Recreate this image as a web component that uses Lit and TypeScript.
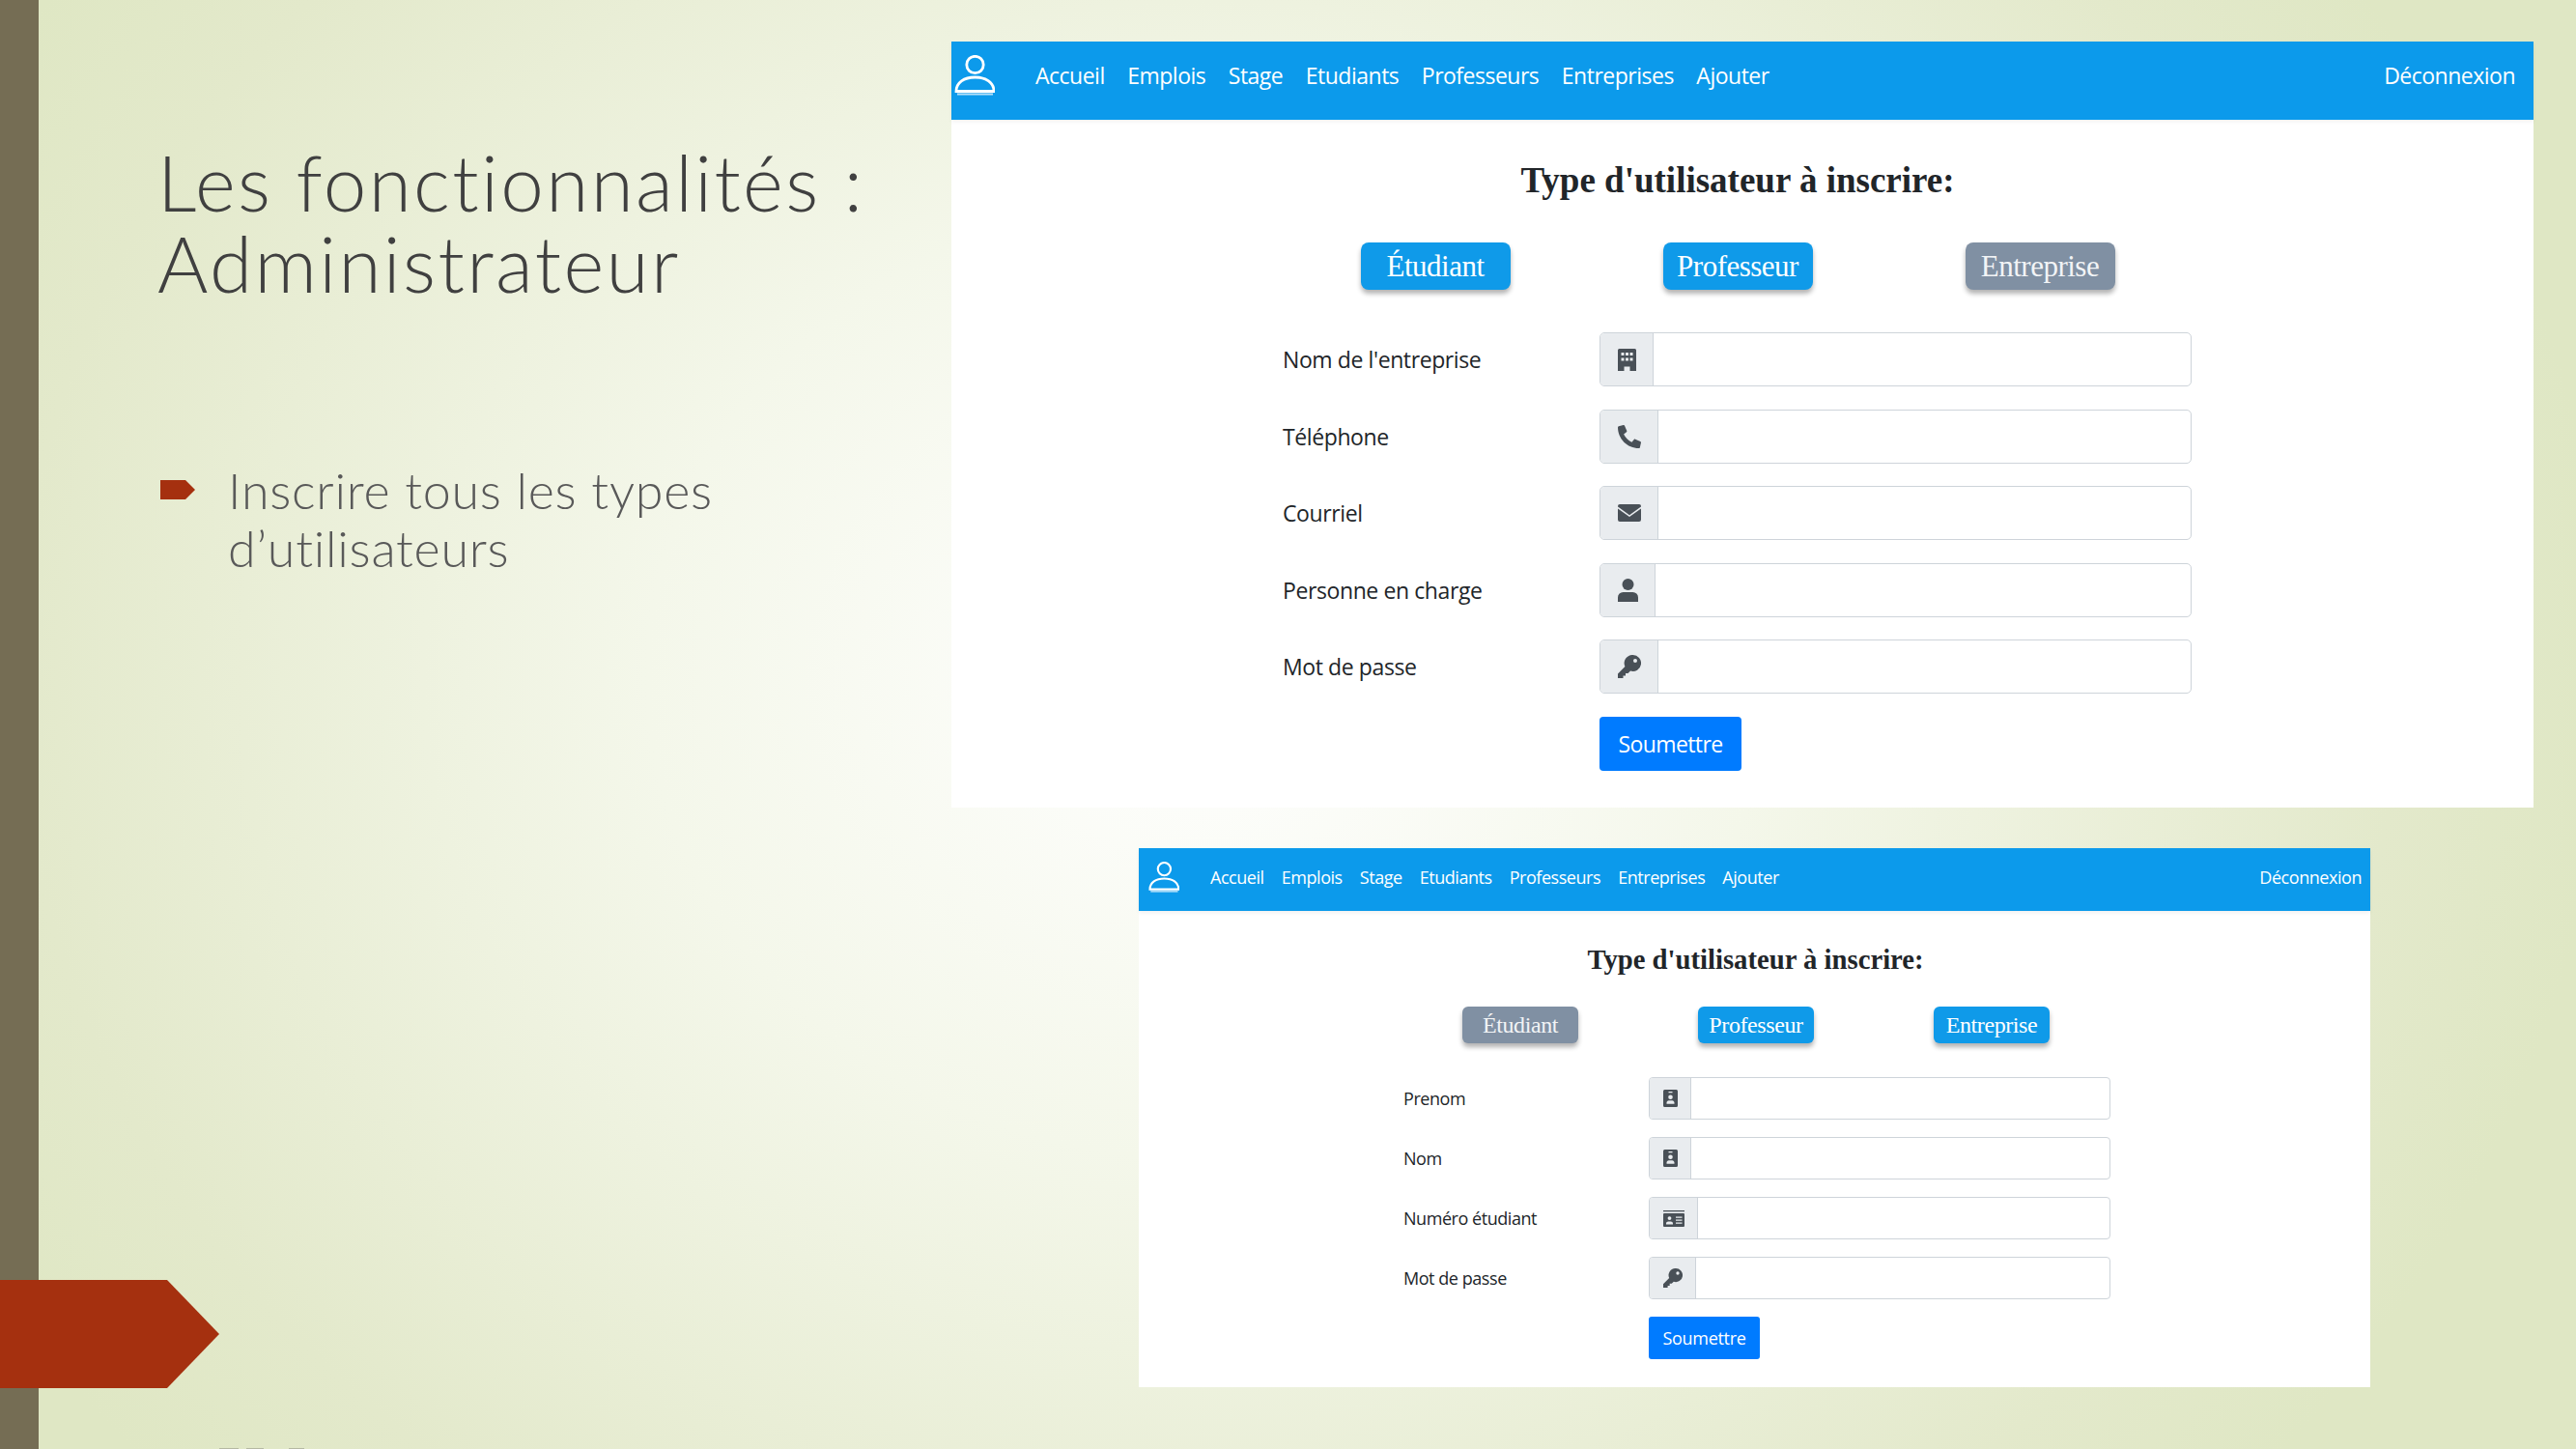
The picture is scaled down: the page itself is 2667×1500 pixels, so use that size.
import { LitElement, html, css, svg } from 'lit';
import { customElement, property } from 'lit/decorators.js';

const ICONS: Record<string, { box: string; body: unknown }> = {
  building: {
    box: '0 0 19 23',
    body: svg`<path fill-rule="evenodd" d="M1.5 0h16A1.5 1.5 0 0 1 19 1.5V23h-6.5v-4.5h-6V23H0V1.5A1.5 1.5 0 0 1 1.5 0zM3.5 4v3h3V4zm4.5 0v3h3V4zm4.5 0v3h3V4zM3.5 9.500v3h3v-3zm4.500 0v3h3v-3zm4.500 0v3h3v-3z"/>`,
  },
  phone: {
    box: '0 0 512 512',
    body: svg`<path transform="matrix(-1 0 0 1 512 0)" d="M493.400 24.600l-104-24c-11.300-2.600-22.900 3.300-27.500 13.900l-48 112c-4.200 9.800-1.400 21.300 6.900 28l60.600 49.600c-36 76.700-98.900 140.500-177.200 177.200l-49.600-60.600c-6.800-8.300-18.200-11.100-28-6.900l-112 48C3.900 366.500-2 378.100.6 389.400l24 104C27.100 504.200 36.700 512 48 512c256.100 0 464-207.500 464-464 0-11.200-7.700-20.900-18.600-23.400z"/>`,
  },
  envelope: {
    box: '0 0 24 18',
    body: svg`<path d="M2 0h20a2 2 0 0 1 2 2v.6l-12 8.600L0 2.600V2a2 2 0 0 1 2-2z"/><path d="M0 4.400l12 8.600 12-8.600V16a2 2 0 0 1-2 2H2a2 2 0 0 1-2-2z"/>`,
  },
  user: {
    box: '0 0 21 24',
    body: svg`<ellipse cx="10.500" cy="6" rx="6" ry="6"/><path d="M5.500 14h10a5.500 5.500 0 0 1 5.500 5.500V24H0v-4.500A5.500 5.500 0 0 1 5.500 14z"/>`,
  },
  key: {
    box: '0 0 24 24',
    body: svg`<path fill-rule="evenodd" d="M15.500 0A8.500 8.500 0 1 1 13 16.600L10.500 19H8v2.500H5.500V24H0v-4.500l7.400-7.400A8.500 8.500 0 0 1 15.500 0zm2.500 4a2 2 0 1 0 0 4 2 2 0 0 0 0-4z"/>`,
  },
  badge: {
    box: '0 0 15 18',
    body: svg`<path fill-rule="evenodd" d="M1.500 0h12A1.500 1.500 0 0 1 15 1.500v15a1.500 1.500 0 0 1-1.500 1.500h-12A1.500 1.500 0 0 1 0 16.500v-15A1.500 1.500 0 0 1 1.500 0zM5.500 2v1.200h4V2zM7.500 5.500a2.300 2.300 0 1 0 0 4.600 2.300 2.300 0 0 0 0-4.600zM3.500 14.800h8v-1.300c0-1.300-1-2.300-2.300-2.300H5.800c-1.300 0-2.300 1-2.300 2.300z"/>`,
  },
  card: {
    box: '0 0 22 17',
    body: svg`<path d="M0 0h22v1.300H0z"/><path fill-rule="evenodd" d="M1 3h20a1 1 0 0 1 1 1v12a1 1 0 0 1-1 1H1a1 1 0 0 1-1-1V4a1 1 0 0 1 1-1zM6.500 6.200a1.900 1.900 0 1 0 0 3.800 1.900 1.900 0 0 0 0-3.800zM3 14.500h7v-1c0-1.200-1-2-2.200-2H5.200c-1.200 0-2.200.8-2.200 2zM13 6.500v1.300h6.500V6.500zm0 3v1.300h6.500V9.500zm0 3v1.300h6.500v-1.300z"/>`,
  },
};

interface Field {
  label: string;
  icon: string;
}

@customElement('form-window')
class FormWindow extends LitElement {
  static styles = css`
    :host {
      display: block;
      position: absolute;
      background: #fff;
      color: #212529;
      font-family: 'Open Sans', 'Noto Sans', sans-serif;
    }

    nav {
      display: flex;
      align-items: center;
      box-sizing: border-box;
      background: #0c9aeb;
      color: #fff;
      box-shadow: 0 2px 4px rgba(0, 0, 0, 0.06);
    }

    .avatar {
      flex-shrink: 0;
      fill: none;
      stroke: #fff;
    }

    .links {
      display: flex;
      flex: 1;
    }

    .logout {
      white-space: nowrap;
    }

    h3 {
      margin: 0;
      text-align: center;
      font-family: 'Liberation Serif', serif;
      font-weight: 700;
      color: #212529;
    }

    .types {
      display: flex;
      justify-content: center;
    }

    .type {
      background: #0f9ae9;
      color: #fff;
      font-family: 'Liberation Serif', serif;
      text-align: center;
      box-sizing: border-box;
      box-shadow: 0 4px 5px rgba(0, 0, 0, 0.3);
    }

    .type.off {
      background: #8090a3;
      color: #f2f4f6;
    }

    form {
      display: flex;
      flex-direction: column;
    }

    .row {
      display: flex;
      align-items: center;
    }

    label {
      flex-shrink: 0;
      color: #212529;
    }

    .group {
      display: flex;
      flex: 1;
      box-sizing: border-box;
      border: 1.500px solid #ced4da;
      background: #fff;
    }

    .addon {
      display: flex;
      align-items: center;
      background: #e9ecef;
      border-right: 1.500px solid #ced4da;
      fill: #495057;
    }

    .addon svg {
      display: block;
    }

    .submit {
      align-self: flex-start;
      background: #007bff;
      color: #fff;
      display: flex;
      align-items: center;
      justify-content: center;
      box-sizing: border-box;
    }

    /* big capture, top right */
    :host(.big) {
      left: 985px;
      top: 43px;
      width: 1638px;
      height: 793px;
    }
    :host(.big) nav {
      height: 81px;
      padding: 0 19px 12px 3px;
      font-size: 23px;
      letter-spacing: -0.5px;
    }
    :host(.big) .avatar {
      width: 42px;
      height: 42px;
      margin-right: 42px;
    }
    :host(.big) .links {
      gap: 23.500px;
    }
    :host(.big) h3 {
      padding: 41px 10px 0 0;
      font-size: 37px;
      line-height: 44px;
    }
    :host(.big) .types {
      gap: 158px;
      margin: 42px 10px 44px 0;
    }
    :host(.big) .type {
      width: 155px;
      height: 49px;
      line-height: 49px;
      font-size: 31px;
      letter-spacing: -0.5px;
      border-radius: 8px;
    }
    :host(.big) form {
      width: 941px;
      margin-left: 343px;
      gap: 23.500px;
    }
    :host(.big) label {
      width: 328px;
      font-size: 23px;
      letter-spacing: -0.4px;
    }
    :host(.big) .group {
      height: 56px;
      border-radius: 5px;
    }
    :host(.big) .addon {
      padding: 0 17px 0 18px;
      border-radius: 4px 0 0 4px;
    }
    :host(.big) .submit {
      margin-left: 328px;
      width: 147px;
      height: 56px;
      font-size: 23px;
      letter-spacing: -0.6px;
      border-radius: 4px;
    }

    /* small capture, below it */
    :host(.small) {
      left: 1179px;
      top: 878px;
      width: 1275px;
      height: 558px;
    }
    :host(.small) nav {
      height: 65px;
      padding: 0 9px 6px 10px;
      font-size: 18px;
      letter-spacing: -0.45px;
    }
    :host(.small) .avatar {
      width: 32px;
      height: 32px;
      margin-right: 32px;
    }
    :host(.small) .links {
      gap: 18px;
    }
    :host(.small) h3 {
      padding: 33px 0 0 2px;
      font-size: 28.700px;
      line-height: 35px;
    }
    :host(.small) .types {
      gap: 124px;
      margin: 31px 0 35px 3px;
    }
    :host(.small) .type {
      width: 120px;
      height: 38px;
      line-height: 38px;
      font-size: 24px;
      letter-spacing: -0.4px;
      border-radius: 6px;
    }
    :host(.small) form {
      width: 732px;
      margin-left: 274px;
      gap: 18px;
    }
    :host(.small) label {
      width: 254px;
      font-size: 18px;
      letter-spacing: -0.45px;
    }
    :host(.small) .group {
      height: 44px;
      border-radius: 4px;
    }
    :host(.small) .addon {
      padding: 0 13px 0 14px;
      border-radius: 3px 0 0 3px;
    }
    :host(.small) .submit {
      margin-left: 254px;
      width: 115px;
      height: 44px;
      font-size: 18px;
      letter-spacing: -0.3px;
      border-radius: 3px;
    }
  `;

  @property({ type: String }) active = '';
  @property({ attribute: false }) fields: Field[] = [];
  @property({ type: Number }) keySize = 24;

  private icon(name: string) {
    const icon = ICONS[name];
    const [, , w, h] = icon.box.split(' ').map(Number);
    const square = name === 'phone' ? 24 : name === 'key' ? this.keySize : 0;
    return html`<svg viewBox=${icon.box} width=${square || w} height=${square || h}>${icon.body}</svg>`;
  }

  render() {
    return html`
      <nav>
        <svg class="avatar" viewBox="0 0 42 42">
          <circle cx="21.500" cy="10" r="8.700" stroke-width="2.800"></circle>
          <path d="M2 37.500c0-9 8-14.500 19.500-14.500S41 28.500 41 37.500z" stroke-width="2.800"></path>
          <path d="M3 40.500h37" stroke-width="2" opacity="0.7"></path>
        </svg>
        <div class="links">
          ${['Accueil', 'Emplois', 'Stage', 'Etudiants', 'Professeurs', 'Entreprises', 'Ajouter'].map(
            (l) => html`<span>${l}</span>`
          )}
        </div>
        <span class="logout">Déconnexion</span>
      </nav>
      <h3>Type d'utilisateur à inscrire:</h3>
      <div class="types">
        ${['Étudiant', 'Professeur', 'Entreprise'].map(
          (t) => html`<div class="type ${t === this.active ? 'off' : ''}">${t}</div>`
        )}
      </div>
      <form>
        ${this.fields.map(
          (f) => html`
            <div class="row">
              <label>${f.label}</label>
              <div class="group">
                <div class="addon">${this.icon(f.icon)}</div>
              </div>
            </div>
          `
        )}
        <div class="submit">Soumettre</div>
      </form>
    `;
  }
}

const COMPANY: Field[] = [
  { label: "Nom de l'entreprise", icon: 'building' },
  { label: 'Téléphone', icon: 'phone' },
  { label: 'Courriel', icon: 'envelope' },
  { label: 'Personne en charge', icon: 'user' },
  { label: 'Mot de passe', icon: 'key' },
];

const STUDENT: Field[] = [
  { label: 'Prenom', icon: 'badge' },
  { label: 'Nom', icon: 'badge' },
  { label: 'Numéro étudiant', icon: 'card' },
  { label: 'Mot de passe', icon: 'key' },
];

@customElement('app-root')
export class AppRoot extends LitElement {
  static styles = css`
    :host {
      display: block;
      position: relative;
      width: 2667px;
      height: 1500px;
      overflow: hidden;
      background: radial-gradient(ellipse 1450px 1250px at 1250px 700px, #fff 0%, #f4f7ea 40%, #e3e9cb 85%, #dfe7c4 100%);
      font-family: 'Lato', 'Open Sans', sans-serif;
    }

    .strip {
      position: absolute;
      left: 0;
      top: 0;
      bottom: 0;
      width: 40px;
      background: #756d54;
    }

    .arrow {
      position: absolute;
      left: 0;
      top: 1325px;
      width: 227px;
      height: 112px;
      background: #a5300f;
      clip-path: polygon(0 0, 173px 0, 100% 50%, 173px 100%, 0 100%);
    }

    /* tops of a footer line that the slide cuts off */
    .cut {
      position: absolute;
      left: 227px;
      bottom: 0;
      display: flex;
      height: 1px;
    }

    .cut span {
      background: #b5b9a2;
    }

    .copy {
      padding: 146px 0 0 163px;
      width: 800px;
    }

    h1 {
      margin: 0;
      font-size: 80px;
      line-height: 84px;
      font-weight: 300;
      letter-spacing: 2.400px;
      color: #404040;
    }

    ul {
      list-style: none;
      margin: 163px 0 0;
      padding: 0 0 0 3px;
    }

    li {
      display: flex;
      gap: 34px;
      font-size: 52px;
      line-height: 60px;
      font-weight: 300;
      letter-spacing: 0.750px;
      color: #595959;
    }

    .bullet {
      flex-shrink: 0;
      width: 36px;
      height: 20px;
      margin-top: 20px;
      background: #a5300f;
      clip-path: polygon(0 0, 26px 0, 100% 50%, 26px 100%, 0 100%);
    }
  `;

  render() {
    return html`
      <div class="strip"></div>
      <div class="arrow"></div>
      <div class="cut">
        <span style="width:20px"></span>
        <span style="width:18px;margin-left:8px"></span>
        <span style="width:16px;margin-left:26px"></span>
      </div>
      <div class="copy">
        <h1>Les fonctionnalités :<br />Administrateur</h1>
        <ul>
          <li><span class="bullet"></span><span>Inscrire tous les types<br />d’utilisateurs</span></li>
        </ul>
      </div>
      <form-window class="big" active="Entreprise" .fields=${COMPANY} .keySize=${24}></form-window>
      <form-window class="small" active="Étudiant" .fields=${STUDENT} .keySize=${20}></form-window>
    `;
  }
}
